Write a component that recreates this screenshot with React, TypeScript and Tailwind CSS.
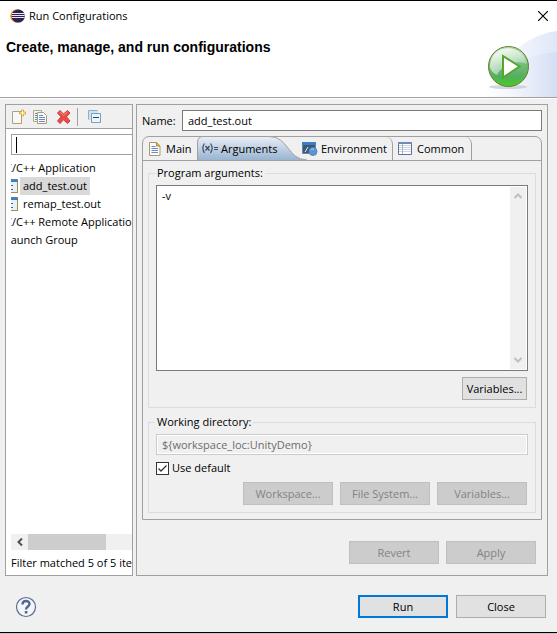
import React, { useState } from "react";

const face = "font-['Open_Sans','Noto_Sans',sans-serif]";

function EclipseLogo() {
  return (
    <svg width="15" height="14" viewBox="0 0 15 14" aria-hidden="true">
      <circle cx="7" cy="7" r="6.8" fill="#f7941e" />
      <circle cx="8.2" cy="7" r="6.6" fill="#2c2255" />
      <path d="M2 4.500h12.400M1.600 6.500h13M2 8.500h12.400" stroke="#e8e6f2" strokeWidth="1" />
    </svg>
  );
}

function RunBadge() {
  return (
    <svg width="157" height="70" viewBox="0 0 157 70" aria-hidden="true">
      <defs>
        <linearGradient id="swoosh" x1="0" x2="1">
          <stop offset="0" stopColor="#ffffff" />
          <stop offset="0.5" stopColor="#f0f4fc" />
          <stop offset="1" stopColor="#dfe7f7" />
        </linearGradient>
        <linearGradient id="swooshLow" x1="0" x2="1">
          <stop offset="0" stopColor="#ffffff" stopOpacity="0" />
          <stop offset="1" stopColor="#cfdaf2" />
        </linearGradient>
        <linearGradient id="ball" x1="0" y1="0" x2="0" y2="1">
          <stop offset="0" stopColor="#cfe8cf" />
          <stop offset="0.45" stopColor="#74bd80" />
          <stop offset="0.75" stopColor="#55ad62" />
          <stop offset="1" stopColor="#3fd01c" />
        </linearGradient>
        <linearGradient id="gloss" x1="0" y1="0" x2="1" y2="1">
          <stop offset="0" stopColor="#ffffff" stopOpacity="0.9" />
          <stop offset="1" stopColor="#ffffff" stopOpacity="0.1" />
        </linearGradient>
      </defs>
      <path d="M85 70C96 36 122 9 157 4V70Z" fill="url(#swoosh)" />
      <path d="M85 70C104 38 128 27 157 25V70Z" fill="url(#swooshLow)" opacity="0.7" />
      <ellipse cx="108" cy="60" rx="19" ry="2" fill="#b9c0c4" opacity="0.6" />
      <circle cx="108.500" cy="39.500" r="20" fill="url(#ball)" stroke="#6b7a35" strokeWidth="1" />
      <circle cx="108.500" cy="39.500" r="18.500" fill="none" stroke="#5fc23c" strokeWidth="1" opacity="0.7" />
      <path d="M90 39C90 28 98 21 108 21C119 21 127 29 127 37C117 33 103 36 97 48C93 46 90 43 90 39Z" fill="url(#gloss)" />
      <path d="M103 29L119.500 39.500L103 50.500Z" fill="#fff" stroke="#53a72b" strokeWidth="2" />
    </svg>
  );
}

function NewIcon() {
  return (
    <svg width="16" height="16" viewBox="0 0 16 16" aria-hidden="true">
      <path d="M1.500 2.500h9v12h-9z" fill="#f5f8fc" stroke="#a8a489" />
      <path d="M2 14.500h8.500v-8" fill="none" stroke="#c39d4d" />
      <path d="M10.500 1h2v2h2v2h-2v2h-2v-2h-2v-2h2z" fill="#fff3b0" stroke="#d0a030" strokeWidth="0.800" />
    </svg>
  );
}

function DuplicateIcon() {
  return (
    <svg width="16" height="16" viewBox="0 0 16 16" aria-hidden="true">
      <path d="M1.500 1.500h8v11h-8z" fill="#eef3fa" stroke="#b8aa7c" />
      <path d="M3 4.500h2M3 6.500h2M3 8.500h2M3 10.500h2" stroke="#6d88b9" />
      <path d="M5.500 3.500h6l3 3v8h-9z" fill="#f6f9fd" stroke="#a79c74" />
      <path d="M7 6.500h4M7 8.500h6M7 10.500h6M7 12.500h6" stroke="#6d88b9" />
    </svg>
  );
}

function DeleteIcon() {
  return (
    <svg width="16" height="16" viewBox="0 0 16 16" aria-hidden="true">
      <path d="M1.500 4L4 1.500L7.500 5L11.500 1.500L14 4L10.500 7.800L14 12L11.500 14.500L7.500 10.800L4 14.500L1.500 12L5 7.800Z" fill="#e84c46" stroke="#d23c38" />
      <path d="M4 3L7.500 6.400L11.500 3" fill="none" stroke="#f58e84" />
    </svg>
  );
}

function CollapseIcon() {
  return (
    <svg width="16" height="16" viewBox="0 0 16 16" aria-hidden="true">
      <path d="M2 2h9v2H4v7H2z" fill="#cfe0ef" />
      <path d="M1.500 10.500v-9h9" fill="none" stroke="#8eaecb" />
      <path d="M4.500 4.500h9v9h-9z" fill="#e9f4fb" stroke="#7d9dbd" />
      <path d="M6 8.500h6" stroke="#12508c" />
    </svg>
  );
}

function PageIcon() {
  return (
    <svg width="12" height="14" viewBox="0 0 12 14" className="shrink-0" aria-hidden="true">
      <path d="M.5.500h7l3.500 3.500v9.500H.5z" fill="#f7faff" stroke="#a99a68" />
      <path d="M7.500.500v3.500h3.500z" fill="#e8b958" stroke="#b98d35" />
      <path d="M2.500 4.500h4M2.500 6.500h6.500M2.500 8.500h6.500M2.500 10.500h6.500" stroke="#6f8dc4" />
    </svg>
  );
}

function ArgsIcon() {
  return (
    <svg width="16" height="12" viewBox="0 0 16 12" fill="none" aria-hidden="true">
      <path d="M2.500 .500Q-.8 5 2.500 10M8.500 .500Q11.800 5 8.500 10" stroke="#3d4c66" strokeWidth="1.200" />
      <path d="M3.500 3L7.500 7.500M7.500 3L3.500 7.500" stroke="#3d4c66" strokeWidth="1.300" />
      <path d="M12 4.500h4M12 6.500h4" stroke="#3d4c66" />
    </svg>
  );
}

function EnvironmentIcon() {
  return (
    <svg width="16" height="14" viewBox="0 0 16 14" className="shrink-0" aria-hidden="true">
      <path d="M.5.500h13v11H.5z" fill="#3c5878" stroke="#6a87ab" />
      <path d="M0 0h14v3H0z" fill="#3d7fc4" />
      <path d="M3 10L6 5" stroke="#e5eef7" />
      <circle cx="11" cy="9.500" r="4" fill="#5b94d2" stroke="#5686bd" />
      <path d="M8.500 8Q10 6 12 7.500" stroke="#a8caec" fill="none" />
    </svg>
  );
}

function TableIcon() {
  return (
    <svg width="14" height="13" viewBox="0 0 14 13" className="shrink-0" aria-hidden="true">
      <path d="M.5.500h13v12H.5z" fill="#fff" stroke="#5f7396" />
      <path d="M0 0h14v2H0z" fill="#6f8bb5" />
      <path d="M1 3.500h12M1 5.500h12M1 7.500h12M1 9.500h12" stroke="#c9d6e6" />
      <path d="M4.500 2v10" stroke="#a3b4cd" />
    </svg>
  );
}

function AppIcon() {
  return (
    <svg width="16" height="14" viewBox="0 0 16 14" className="shrink-0" aria-hidden="true">
      <path d="M.5.500h15v13H.5z" fill="#e6f1fa" stroke="#5c7da8" />
      <path d="M1 1h14v2H1z" fill="#3f7fc0" />
      <path d="M15.500 3v10.500H9" fill="none" stroke="#a68b49" />
      <path d="M6 6.500h5M6 10.500h5" stroke="#3c6b99" />
    </svg>
  );
}

function Chevron({ d, color }: { d: string; color: string }) {
  return (
    <svg width="8" height="8" viewBox="0 0 8 8" fill="none" aria-hidden="true">
      <path d={d} stroke={color} strokeWidth="2" />
    </svg>
  );
}

type PushProps = {
  children: React.ReactNode;
  width?: string;
  disabled?: boolean;
  primary?: boolean;
};

function Push({ children, width = "w-[90px]", disabled, primary }: PushProps) {
  const tone = disabled
    ? "border border-[#bfbfbf] bg-[#cccccc] text-[#838383]"
    : primary
      ? "border-2 border-[#0078d7] bg-[#e1e1e1]"
      : "border border-[#adadad] bg-[#e1e1e1]";
  return (
    <button type="button" disabled={disabled} className={`flex h-[23px] items-center justify-center ${width} ${tone}`}>
      {children}
    </button>
  );
}

function LaunchTree() {
  return (
    <ul className="-ml-[9px] w-max leading-[18px]">
      <li className="h-[18px] pl-[3px]">C/C++ Application</li>
      <li className="flex h-[18px] items-center">
        <AppIcon />
        <span className="ml-0.5 h-[18px] bg-[#d9d9d9] px-[3px]">add_test.out</span>
      </li>
      <li className="flex h-[18px] items-center">
        <AppIcon />
        <span className="ml-0.5 px-[3px]">remap_test.out</span>
      </li>
      <li className="h-[18px] pl-[3px]">C/C++ Remote Application</li>
      <li className="h-[18px] pl-[3px]">Launch Group</li>
    </ul>
  );
}

function Sidebar() {
  return (
    <aside className="flex w-32 shrink-0 flex-col overflow-hidden border border-[#a0a0a0] bg-white">
      <div className="flex h-6 shrink-0 items-center border-b border-[#a0a0a0] bg-[#f0f0f0] pl-[5px]">
        <button type="button" aria-label="New launch configuration"><NewIcon /></button>
        <button type="button" aria-label="Duplicate" className="ml-[5px]"><DuplicateIcon /></button>
        <button type="button" aria-label="Delete" className="ml-2"><DeleteIcon /></button>
        <span className="ml-[5px] h-[18px] w-px bg-[#a0a0a0]" />
        <button type="button" aria-label="Collapse all" className="ml-[9px]"><CollapseIcon /></button>
      </div>
      <div className="flex flex-1 flex-col pt-[5px] pl-[5px]">
        <div className="flex h-[21px] items-center border border-r-0 border-[#a0a0a0] pl-1">
          <span className="h-4 w-px bg-black" />
          <input aria-label="Filter" className="w-full min-w-0 outline-none" />
        </div>
        <div className="mt-1 flex-1 overflow-hidden">
          <LaunchTree />
        </div>
        <div className="flex h-4 items-center bg-[#f0f0f0]">
          <span className="flex w-[17px] justify-center">
            <Chevron d="M6 0.500L2.500 4L6 7.500" color="#505050" />
          </span>
          <span className="h-4 w-[78px] bg-[#cdcdcd]" />
        </div>
        <p className="mt-1 mb-[3px] h-[18px] overflow-hidden leading-[18px] whitespace-nowrap">Filter matched 5 of 5 items</p>
      </div>
    </aside>
  );
}

function TabBar() {
  return (
    <div role="tablist" className="flex h-6 rounded-t-[7px] border-b border-[#a0a0a0]">
      <button type="button" role="tab" aria-selected="false" className="flex w-[54px] items-center gap-[5px] pl-1.5">
        <PageIcon />
        Main
      </button>
      <button type="button" role="tab" aria-selected="true" className="relative flex w-[105px] items-center gap-[3px] pl-[5px]">
        <svg className="absolute -top-px left-0" width="112" height="25" viewBox="0 0 112 25" aria-hidden="true">
          <defs>
            <linearGradient id="activeTab" x1="0" y1="0" x2="0" y2="1">
              <stop offset="0" stopColor="#e9eff5" />
              <stop offset="1" stopColor="#99b4d1" />
            </linearGradient>
          </defs>
          <path d="M.5 24V6Q1 .500 6 .500H72C92 .500 90 23.500 110 24Z" fill="url(#activeTab)" />
          <path d="M.5 24V6Q1 .500 6 .500H72C92 .500 90 23.500 110 24" fill="none" stroke="#a0a0a0" />
        </svg>
        <span className="relative"><ArgsIcon /></span>
        <span className="relative">Arguments</span>
      </button>
      <button type="button" role="tab" aria-selected="false" className="flex w-[91px] items-center gap-[3px] rounded-tr-[7px] border-r border-[#a0a0a0]">
        <EnvironmentIcon />
        Environment
      </button>
      <button type="button" role="tab" aria-selected="false" className="flex w-[79px] items-center gap-[5px] rounded-tr-[7px] border-r border-[#a0a0a0] pl-[5px]">
        <TableIcon />
        Common
      </button>
    </div>
  );
}

function ArgumentsPage() {
  const [args, setArgs] = useState("-v");
  return (
    <div className="px-[5px] pt-1 pb-1.5">
      <fieldset className="border border-[#dcdcdc] px-[7px] pb-[7px]">
        <legend className="-ml-px h-4 px-0.5 leading-4">Program arguments:</legend>
        <div className="mt-1 flex h-[186px] border border-[#7a7a7a] bg-white p-px">
          <textarea
            aria-label="Program arguments"
            value={args}
            onChange={(e) => setArgs(e.target.value)}
            className="min-w-0 flex-1 resize-none px-1 py-px leading-4 outline-none"
          />
          <div className="flex w-4 flex-col items-center justify-between bg-[#f0f0f0] py-[5px]">
            <Chevron d="M0.500 6L4 2.500L7.500 6" color="#bfbfbf" />
            <Chevron d="M0.500 2L4 5.500L7.500 2" color="#bfbfbf" />
          </div>
        </div>
        <div className="mt-1.5 flex justify-end pr-px">
          <Push width="w-[65px]">Variables...</Push>
        </div>
      </fieldset>
      <fieldset className="mt-1.5 border border-[#dcdcdc] px-[7px] pb-[7px]">
        <legend className="-ml-px h-4 px-0.5 leading-4">Working directory:</legend>
        <input
          aria-label="Working directory"
          disabled
          defaultValue="${workspace_loc:UnityDemo}"
          className="mt-1 block h-[21px] w-full border border-[#cccccc] bg-[#f0f0f0] px-[5px] text-[#6d6d6d] inset-ring inset-ring-white"
        />
        <label className="mt-1 flex h-[18px] w-max items-center gap-[3px]">
          <span className="relative flex h-[13px] w-[13px]">
            <input type="checkbox" defaultChecked className="peer h-[13px] w-[13px] appearance-none border border-[#333333] bg-white" />
            <svg className="pointer-events-none absolute inset-0 hidden peer-checked:block" width="13" height="13" viewBox="0 0 13 13" fill="none" aria-hidden="true">
              <path d="M2.500 6.500L5 9L10.500 3.500" stroke="#333333" strokeWidth="1.300" />
            </svg>
          </span>
          Use default
        </label>
        <div className="mt-[5px] flex justify-end gap-[7px] pr-px">
          <Push disabled>Workspace...</Push>
          <Push disabled>File System...</Push>
          <Push disabled>Variables...</Push>
        </div>
      </fieldset>
    </div>
  );
}

function Editor() {
  return (
    <main className="flex min-w-0 flex-1 flex-col border border-[#a0a0a0] px-[5px] pt-[5px] pb-[11px]">
      <div className="flex h-[21px] items-center">
        <label htmlFor="config-name" className="w-10 shrink-0">Name:</label>
        <input
          id="config-name"
          defaultValue="add_test.out"
          className="h-[21px] min-w-0 flex-1 border border-[#7a7a7a] bg-white px-[5px] outline-none"
        />
      </div>
      <div className="mt-[5px] rounded-t-[7px] border border-[#a0a0a0]">
        <TabBar />
        <ArgumentsPage />
      </div>
      <div className="mt-[21px] flex justify-end gap-[7px] pr-1.5">
        <Push disabled>Revert</Push>
        <Push disabled>Apply</Push>
      </div>
    </main>
  );
}

export default function App() {
  return (
    <div className={`${face} bg-[#f0f0f0] text-[11px] leading-4 text-black`}>
      <div className="border-y border-black">
        <header className="relative h-[97px] border-b border-[#a0a0a0] bg-white">
          <div className="absolute right-0 bottom-0"><RunBadge /></div>
          <div className="relative flex h-[30px] items-center pr-[9px] pl-[10px]">
            <EclipseLogo />
            <span className="ml-1 flex-1">Run Configurations</span>
            <button type="button" aria-label="Close window">
              <svg width="10" height="10" viewBox="0 0 10 10" aria-hidden="true">
                <path d="M0 0L10 10M10 0L0 10" stroke="#000" strokeWidth="1.200" />
              </svg>
            </button>
          </div>
          <h1 className="relative pt-2 pl-1.5 font-['Liberation_Sans',Arial,sans-serif] text-[14px] leading-4 font-bold">
            Create, manage, and run configurations
          </h1>
        </header>
        <div className="flex gap-[3px] border-t border-white pt-[5px] pr-[9px] pl-[5px]">
          <Sidebar />
          <Editor />
        </div>
        <footer className="flex items-center gap-2 pt-[19px] pr-[11px] pb-[14px] pl-[15px]">
          <button type="button" aria-label="Help" className="mr-auto">
            <svg width="22" height="22" viewBox="0 0 22 22" fill="none" aria-hidden="true">
              <circle cx="11" cy="11" r="9.500" fill="#f4f6f9" stroke="#5b6d8e" strokeWidth="1.200" />
              <path d="M7.500 8.500C7.500 4 14.500 4 14.500 8C14.500 10.500 11 10.500 11 13.500" stroke="#536790" strokeWidth="2.400" />
              <path d="M9.800 15h2.600v2.500H9.800z" fill="#536790" />
            </svg>
          </button>
          <Push primary>Run</Push>
          <Push>Close</Push>
        </footer>
      </div>
      <div className="h-px bg-[#c8c8c8]" />
    </div>
  );
}
